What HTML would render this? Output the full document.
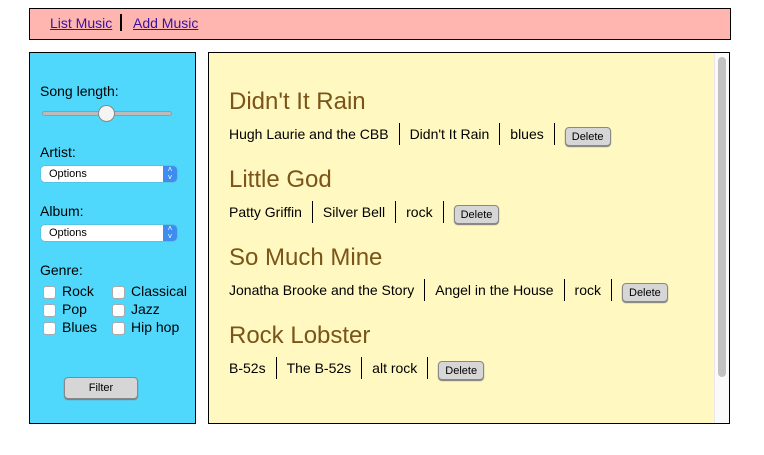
<!DOCTYPE html>
<html><head><style>
body{margin:0;width:764px;height:455px;background:#fff;font-family:"Liberation Sans",Arial,sans-serif;position:relative;overflow:hidden}
.a{position:absolute}
#hdr{left:29px;top:8px;width:700px;height:30px;border:1px solid #000;background:#ffb6b0}
#hdr a{color:#3a12a0;text-decoration:underline;font-size:14px;position:absolute;top:6px}
#side{left:29px;top:52px;width:165px;height:370px;border:1px solid #000;background:#4fd8fb}
#main{left:208px;top:52px;width:520px;height:370px;border:1px solid #000;background:#fff8c0}
.lbl{font-size:14px;color:#000}
.sel{width:136px;height:16px;background:#fff;border-radius:4px;box-shadow:0 0 1px #666;font-size:11px}
.sel span{position:absolute;left:8px;top:2px}
.sel i{position:absolute;right:0;top:0;width:14px;height:16px;background:#3d8cf0;border-radius:0 4px 4px 0;color:#fff;font-style:normal;font-size:8px;text-align:center;line-height:8px}
.cb{width:11px;height:11px;background:#fff;border-radius:3px;border:1px solid #aaa}
h2{position:absolute;margin:0;font-weight:normal;font-size:24px;color:#7a5418;left:229px}
.row{position:absolute;left:229px;font-size:14px;display:flex;align-items:center}
.row span{padding:0 10px;border-right:1px solid #000;line-height:22px}
.row span:first-child{padding-left:0}
.btn{margin-left:10px;margin-top:5px;font-size:11px;background:#d6d6d6;border:1px solid #888;border-radius:4px;padding:3px 6px 2px;box-shadow:0 1px 1px #777}
</style></head><body>
<div id="hdr" class="a"><a style="left:20px">List Music</a><div class="a" style="left:90px;top:5px;width:2px;height:17px;background:#000"></div><a style="left:103px">Add Music</a></div>
<div id="side" class="a"></div>
<div class="a lbl" style="left:40px;top:83px">Song length:</div>
<div class="a" style="left:42px;top:111px;width:128px;height:3px;background:#bbb;border:1px solid #999;border-radius:3px"></div>
<div class="a" style="left:98px;top:105px;width:15px;height:15px;background:#f4f4f4;border:1px solid #888;border-radius:50%"></div>
<div class="a lbl" style="left:40px;top:144px">Artist:</div>
<div class="a sel" style="left:41px;top:166px"><span>Options</span><i>˄<br>˅</i></div>
<div class="a lbl" style="left:40px;top:203px">Album:</div>
<div class="a sel" style="left:41px;top:225px"><span>Options</span><i>˄<br>˅</i></div>
<div class="a lbl" style="left:40px;top:262px">Genre:</div>
<div class="a cb" style="left:43px;top:286px"></div><div class="a lbl" style="left:62px;top:283px">Rock</div>
<div class="a cb" style="left:43px;top:304px"></div><div class="a lbl" style="left:62px;top:301px">Pop</div>
<div class="a cb" style="left:43px;top:322px"></div><div class="a lbl" style="left:62px;top:319px">Blues</div>
<div class="a cb" style="left:112px;top:286px"></div><div class="a lbl" style="left:131px;top:283px">Classical</div>
<div class="a cb" style="left:112px;top:304px"></div><div class="a lbl" style="left:131px;top:301px">Jazz</div>
<div class="a cb" style="left:112px;top:322px"></div><div class="a lbl" style="left:131px;top:319px">Hip hop</div>
<div class="a" style="left:64px;top:377px;width:72px;height:20px;background:#d6d6d6;border:1px solid #888;border-radius:4px;box-shadow:0 1px 1px #777;font-size:11px;text-align:center;line-height:20px">Filter</div>
<div id="main" class="a"></div>
<div class="a" style="left:714px;top:53px;width:14px;height:370px;background:#fafafa;border-left:1px solid #e8e8e8"></div>
<div class="a" style="left:718px;top:57px;width:8px;height:320px;background:#c2c2c2;border-radius:4px"></div>
<h2 style="top:88px">Didn't It Rain</h2>
<div class="row" style="top:122px"><span>Hugh Laurie and the CBB</span><span>Didn't It Rain</span><span>blues</span><div class="btn">Delete</div></div>
<h2 style="top:166px">Little God</h2>
<div class="row" style="top:200px"><span>Patty Griffin</span><span>Silver Bell</span><span>rock</span><div class="btn">Delete</div></div>
<h2 style="top:244px">So Much Mine</h2>
<div class="row" style="top:278px"><span>Jonatha Brooke and the Story</span><span>Angel in the House</span><span>rock</span><div class="btn">Delete</div></div>
<h2 style="top:322px">Rock Lobster</h2>
<div class="row" style="top:356px"><span>B-52s</span><span>The B-52s</span><span>alt rock</span><div class="btn">Delete</div></div>
</body></html>
